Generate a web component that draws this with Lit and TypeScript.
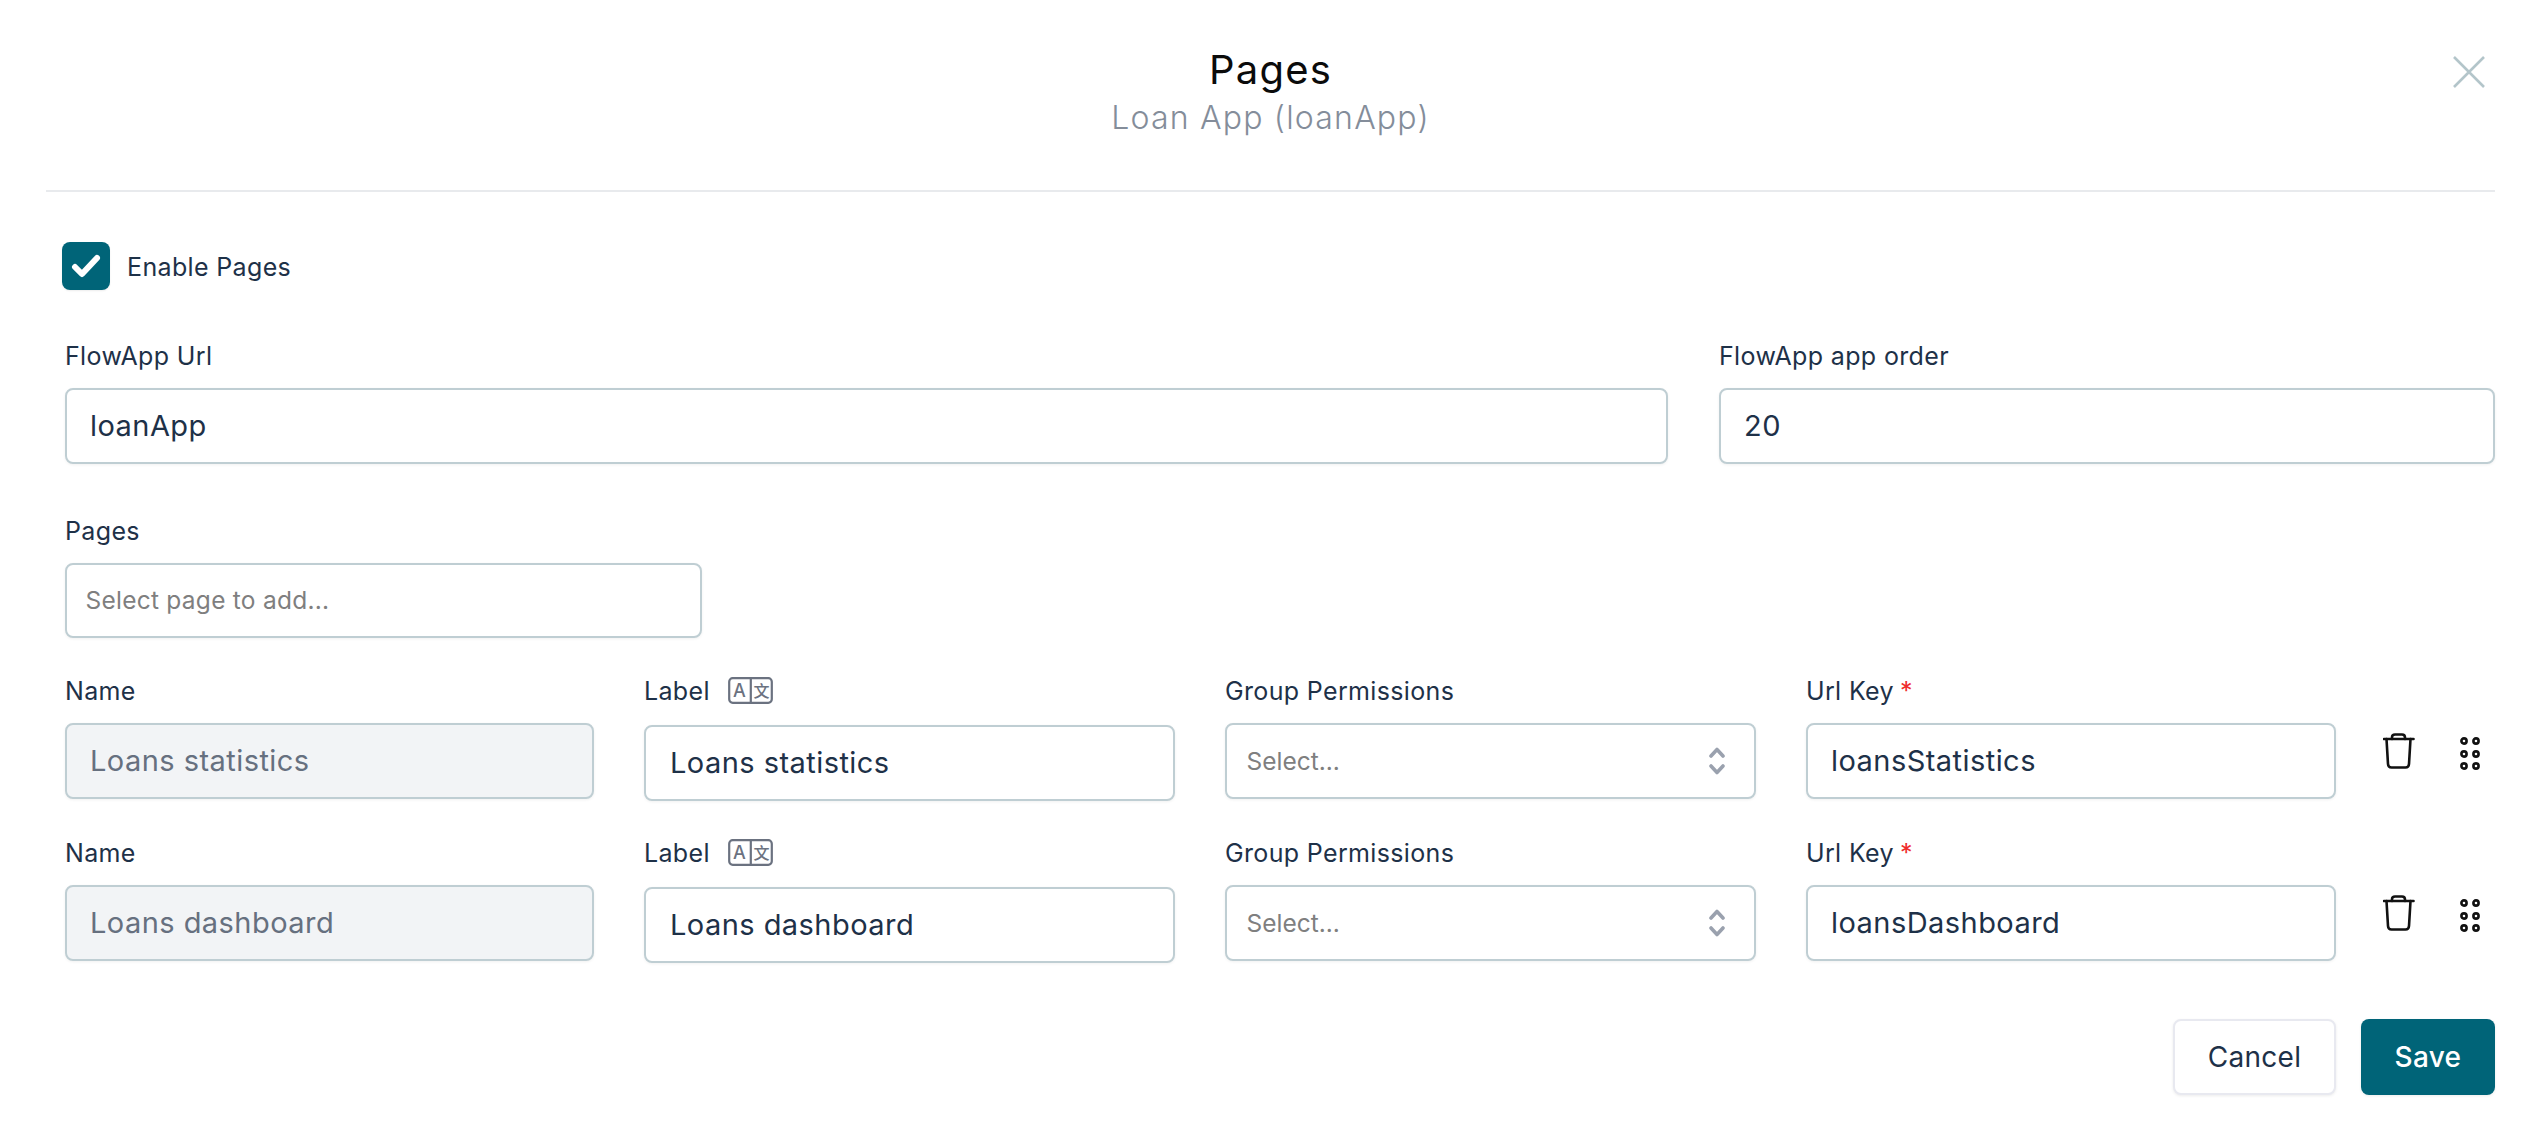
import { LitElement, html, css, svg } from "lit";
import { customElement } from "lit/decorators.js";

const trashIcon = html`<svg class="trash" viewBox="0 0 32 37" fill="none" stroke="#111" stroke-width="2.6" stroke-linecap="round" stroke-linejoin="round">
  <path d="M1 6H30.5"></path>
  <path d="M9 6V4.5Q9 1.5 12 1.5H19Q22 1.5 22 4.5V6"></path>
  <path d="M3.5 6L5 31Q5.2 34.5 8.5 34.5H22.5Q25.8 34.5 26 31L27.5 6"></path>
</svg>`;

const dotsIcon = html`<svg class="dots" viewBox="0 0 24 36" fill="none" stroke="#111" stroke-width="2.6">
  ${[5, 18, 30].map((y) => svg`<circle cx="6" cy=${y} r="2.6"></circle><circle cx="18" cy=${y} r="2.6"></circle>`)}
</svg>`;

const translateIcon = html`<svg class="translate" viewBox="0 0 45 27" fill="none">
  <rect x="1.2" y="1.2" width="42.6" height="24.6" rx="3.5" stroke="#6b7280" stroke-width="2.2"></rect>
  <path d="M22.8 1.2V25.8" stroke="#6b7280" stroke-width="2.2"></path>
  <text x="11.5" y="20" text-anchor="middle" class="tr-a">A</text>
  <text x="33.5" y="20" text-anchor="middle" class="tr-b">文</text>
</svg>`;

const chevrons = html`<svg class="chev" viewBox="0 0 16 28" fill="none" stroke="#9aa1ae" stroke-width="3.6" stroke-linecap="round" stroke-linejoin="round">
  <path d="M2 9L8 2.5L14 9"></path>
  <path d="M2 19L8 25.5L14 19"></path>
</svg>`;

const rows = [
  { name: "Loans statistics", key: "loansStatistics" },
  { name: "Loans dashboard", key: "loansDashboard" },
];

@customElement("app-root")
export class AppRoot extends LitElement {
  static styles = css`
    :host {
      display: block;
      width: 2540px;
      height: 1140px;
      background: #fff;
      font-family: Inter, "Noto Sans", sans-serif;
      color: #1e3148;
      box-sizing: border-box;
      padding: 0 45px 0 46px;
      overflow: hidden;
    }
    * { box-sizing: border-box; }
    .header {
      height: 192px;
      border-bottom: 2px solid #e8eaed;
      display: grid;
      grid-template-columns: 1fr auto 1fr;
      align-items: start;
    }
    .titles {
      grid-column: 2;
      padding-top: 46px;
      display: flex;
      flex-direction: column;
      align-items: center;
      gap: 6px;
    }
    .title {
      font-size: 40px;
      line-height: 48px;
      letter-spacing: 1.2px;
      color: #0b0b0b;
      font-weight: 400;
    }
    .subtitle {
      font-size: 32px;
      line-height: 36px;
      letter-spacing: 1.2px;
      color: #848d9a;
      font-weight: 300;
    }
    .close {
      grid-column: 3;
      justify-self: end;
      width: 32px;
      height: 32px;
      margin: 56px 10px 0 0;
    }
    .body {
      padding-left: 19px;
    }
    .check-row {
      margin: 50px 0 50px -3px;
      display: flex;
      align-items: center;
      gap: 17px;
      height: 48px;
    }
    .check-row .lbl { padding-top: 2px; }
    .checkbox {
      width: 48px;
      height: 48px;
      border-radius: 8px;
      background: #006478;
      box-shadow: 0 1px 2px rgba(0, 0, 0, 0.08);
    }
    .checkbox svg { display: block; width: 48px; height: 48px; }
    .lbl {
      font-size: 25px;
      line-height: 32px;
      letter-spacing: 0.35px;
      color: #1e3148;
      white-space: nowrap;
    }
    .req { color: #ef2b2b; margin-left: 6px; }
    .top-grid {
      display: grid;
      grid-template-columns: 1603px 776px;
      column-gap: 51px;
    }
    .field { display: flex; flex-direction: column; gap: 16px; min-width: 0; }
    .input {
      height: 75.5px;
      border: 2.5px solid #bfced3;
      border-radius: 8px;
      background: #fff;
      box-shadow: 0 1px 3px rgba(0, 0, 0, 0.06);
      display: flex;
      align-items: center;
      padding: 0 23px;
      font-size: 29px;
      letter-spacing: 0.45px;
      color: #1e3148;
      white-space: nowrap;
    }
    .disabled { background: #f2f4f6; color: #66707f; }
    .pages-field { width: 637px; margin-top: 51px; margin-bottom: 37px; }
    .placeholder {
      font-size: 24.5px;
      letter-spacing: 0.25px;
      color: #7f7f7f;
      padding: 0 18.5px;
    }
    .select {
      justify-content: space-between;
      padding: 0 29.5px 0 19.5px;
      letter-spacing: 0;
    }
    .chev { width: 16px; height: 28px; flex: none; }
    .rows { display: flex; flex-direction: column; gap: 37px; }
    .row {
      display: grid;
      grid-template-columns: 529px 531px 531px 530px 1fr;
      column-gap: 50px;
      height: 125px;
    }
    .label-col .input { padding-left: 24px; }
    .label-row {
      display: flex;
      align-items: flex-start;
      gap: 18.5px;
      height: 34px;
    }
    .translate { width: 45px; height: 27px; margin-top: 2px; flex: none; }
    .tr-a { font: 500 18px Inter, sans-serif; fill: #6b7280; }
    .tr-b { font: 500 16px "Noto Sans CJK SC", sans-serif; fill: #6b7280; }
    .row-actions {
      margin-left: -3px;
      display: flex;
      align-items: flex-start;
      padding-top: 58px;
      gap: 43px;
    }
    .trash { width: 32px; height: 37px; flex: none; }
    .dots { width: 24px; height: 36px; flex: none; margin-top: 3px; }
    .footer {
      display: flex;
      justify-content: flex-end;
      gap: 25px;
      margin-top: 57px;
    }
    .btn {
      height: 76px;
      border-radius: 8px;
      display: flex;
      align-items: center;
      justify-content: center;
      font-size: 28px;
      letter-spacing: 0.3px;
      box-shadow: 0 1px 3px rgba(0, 0, 0, 0.08);
    }
    .cancel {
      width: 163px;
      background: #fff;
      border: 2.5px solid #e8e9f0;
      color: #1e3148;
    }
    .save {
      width: 134px;
      background: #006478;
      color: #fff;
      font-weight: 500;
    }
  `;

  render() {
    return html`
      <div class="header">
        <div class="titles">
          <div class="title">Pages</div>
          <div class="subtitle">Loan App (loanApp)</div>
        </div>
        <svg class="close" viewBox="0 0 32 32" fill="none" stroke="#b3c5ca" stroke-width="2.6">
          <path d="M1 1L31 31M31 1L1 31"></path>
        </svg>
      </div>
      <div class="body">
        <div class="check-row">
          <div class="checkbox">
            <svg viewBox="0 0 48 48" fill="none" stroke="#fff" stroke-width="6" stroke-linecap="round" stroke-linejoin="round">
              <path d="M13 25L20 32L35 16"></path>
            </svg>
          </div>
          <div class="lbl">Enable Pages</div>
        </div>
        <div class="top-grid">
          <div class="field">
            <div class="lbl">FlowApp Url</div>
            <div class="input">loanApp</div>
          </div>
          <div class="field">
            <div class="lbl">FlowApp app order</div>
            <div class="input">20</div>
          </div>
        </div>
        <div class="field pages-field">
          <div class="lbl">Pages</div>
          <div class="input placeholder">Select page to add...</div>
        </div>
        <div class="rows">
          ${rows.map(
            (r) => html`
              <div class="row">
                <div class="field">
                  <div class="lbl">Name</div>
                  <div class="input disabled">${r.name}</div>
                </div>
                <div class="field label-col">
                  <div class="label-row"><div class="lbl">Label</div>${translateIcon}</div>
                  <div class="input">${r.name}</div>
                </div>
                <div class="field">
                  <div class="lbl">Group Permissions</div>
                  <div class="input placeholder select"><span>Select...</span>${chevrons}</div>
                </div>
                <div class="field">
                  <div class="lbl">Url Key<span class="req">*</span></div>
                  <div class="input">${r.key}</div>
                </div>
                <div class="row-actions">${trashIcon}${dotsIcon}</div>
              </div>
            `
          )}
        </div>
        <div class="footer">
          <div class="btn cancel">Cancel</div>
          <div class="btn save">Save</div>
        </div>
      </div>
    `;
  }
}
